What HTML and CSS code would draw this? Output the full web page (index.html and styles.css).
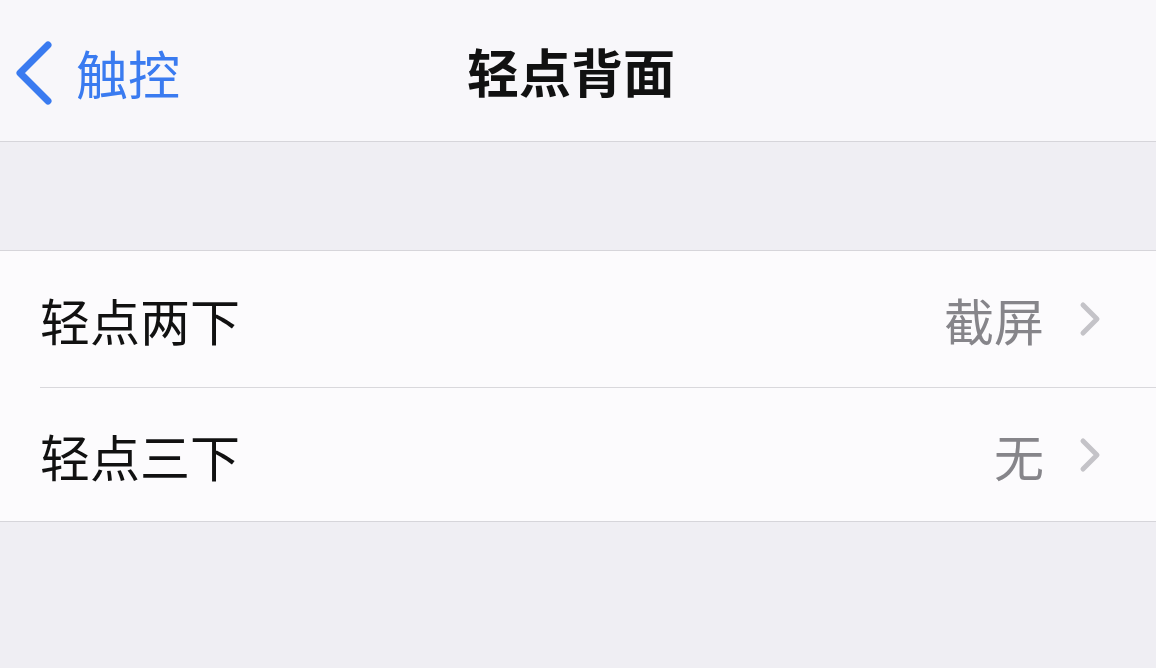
FILE: index.html
```html
<!DOCTYPE html>
<html lang="zh-CN">

<head>
    <meta charset="UTF-8">
    <meta name="viewport" content="width=device-width, initial-scale=1.0">
    <title>轻点背面</title>
    <link rel="stylesheet" href="styles.css">
</head>

<body>
    <div class="navBar">
        <a class="backLink" href="#">
            <svg class="backIcon" width="40" height="64" viewBox="0 0 40 64">
                <path d="M34 4 L6 32 L34 60" />
            </svg>
            <span>触控</span>
        </a>
        <h1 class="navTitle">轻点背面</h1>
    </div>

    <div class="spacer"></div>

    <div class="group">
        <div class="row">
            <span class="rowLabel">轻点两下</span>
            <span class="rowValue">截屏</span>
            <svg class="chevron" width="24" height="36" viewBox="0 0 24 36">
                <path d="M5 4 L19 18 L5 32" />
            </svg>
        </div>
        <div class="row">
            <span class="rowLabel">轻点三下</span>
            <span class="rowValue">无</span>
            <svg class="chevron" width="24" height="36" viewBox="0 0 24 36">
                <path d="M5 4 L19 18 L5 32" />
            </svg>
        </div>
    </div>
</body>

</html>
```

FILE: styles.css
```css
body {
    font-family: "Noto Sans CJK SC", "Noto Sans", sans-serif;
    padding: 0;
    margin: 0;
    background-color: #efeef3;
}

.navBar {
    position: relative;
    display: flex;
    align-items: center;
    justify-content: center;
    height: 141px;
    background-color: #f8f7fa;
    border-bottom: 1px solid #d6d5da;
}

.backLink {
    position: absolute;
    left: 14px;
    top: 41px;
    display: flex;
    align-items: center;
    gap: 22px;
    color: #3a7bf0;
    text-decoration: none;
    font-size: 52px;
    line-height: 64px;
}

.backIcon path {
    fill: none;
    stroke: #3a7bf0;
    stroke-width: 7;
    stroke-linecap: round;
    stroke-linejoin: round;
}

.navTitle {
    margin: 0 14px 0 0;
    font-size: 52px;
    font-weight: 600;
    color: #111;
    line-height: 64px;
}

.spacer {
    height: 108px;
}

.group {
    background-color: #fcfbfd;
    border-top: 1px solid #d6d5da;
    border-bottom: 1px solid #d6d5da;
}

.row {
    display: flex;
    align-items: center;
    height: 136px;
    margin-left: 40px;
    padding-right: 54px;
    border-bottom: 1px solid #d9d8dc;
    font-size: 50px;
}

.row:last-child {
    height: 133px;
    border-bottom: none;
}

.rowLabel {
    flex: 1;
    color: #111;
}

.rowValue {
    color: #86858a;
    margin-right: 34px;
}

.chevron path {
    fill: none;
    stroke: #c4c3c8;
    stroke-width: 5;
    stroke-linecap: round;
    stroke-linejoin: round;
}
```
